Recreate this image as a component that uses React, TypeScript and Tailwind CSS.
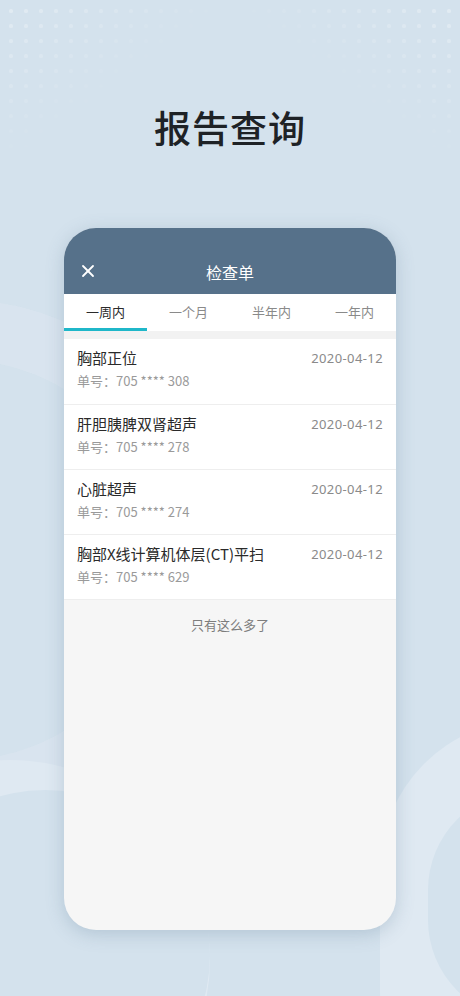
import { X } from 'lucide-react';

const TABS = ['一周内', '一个月', '半年内', '一年内'];

const REPORTS = [
  { name: '胸部正位', no: '705 **** 308', date: '2020-04-12' },
  { name: '肝胆胰脾双肾超声', no: '705 **** 278', date: '2020-04-12' },
  { name: '心脏超声', no: '705 **** 274', date: '2020-04-12' },
  { name: '胸部X线计算机体层(CT)平扫', no: '705 **** 629', date: '2020-04-12' },
];

function DotGrid({ flip }: { flip?: boolean }) {
  const dots = [];
  for (let r = 0; r < 10; r++) {
    for (let c = 0; c < 14; c++) {
      const fade = 1 - (r / 10 + c / 14) * 0.95;
      if (fade <= 0.05) continue;
      dots.push(
        <rect key={`${r}-${c}`} x={c * 15 + 9} y={r * 15 + 9} width={4} height={4} rx={1.5} fill="#ffffff" opacity={fade * 0.3} />
      );
    }
  }
  return (
    <svg width="220" height="160" className={flip ? 'absolute top-0 right-0 -scale-x-100' : 'absolute top-0 left-0'}>
      {dots}
    </svg>
  );
}

export default function App() {
  return (
    <div
      className="relative w-[460px] h-[996px] overflow-hidden bg-[#d4e2ed]"
      style={{ fontFamily: '"Noto Sans CJK SC", "Noto Sans", sans-serif' }}
    >
      {/* background decoration */}
      <DotGrid />
      <DotGrid flip />
      <div className="absolute left-[-300px] top-[300px] w-[520px] h-[520px] rounded-full border-[60px] border-[#dbe6ef]/70" />
      <div className="absolute left-[-190px] top-[760px] w-[400px] h-[400px] rounded-full bg-[#dfe9f2]" />
      <div className="absolute left-[-120px] top-[790px] w-[330px] h-[330px] rounded-full bg-[#d4e2ed]" />
      <div className="absolute left-[380px] top-[720px] w-[300px] h-[420px] rounded-full bg-[#dfe9f2]" />
      <div className="absolute left-[428px] top-[790px] w-[200px] h-[230px] rounded-full bg-[#d4e2ed]" />

      <div className="relative flex flex-col items-center">
        <h1 className="mt-[100px] h-[54px] text-[37px] leading-[54px] font-medium tracking-[1px] text-[#1e2226]">
          报告查询
        </h1>

        <div className="mt-[74px] w-[332px] h-[702px] rounded-[32px] overflow-hidden bg-[#f6f6f6] shadow-[0_4px_18px_rgba(80,110,140,0.25)] flex flex-col">
          {/* header */}
          <div className="h-[66px] bg-[#56718a] flex items-end pb-[10px] px-[14px] relative">
            <X className="w-[20px] h-[20px] text-white mb-[3px]" strokeWidth={2.2} />
            <div className="absolute inset-x-0 bottom-[10px] text-center text-white text-[16px] leading-[24px]">检查单</div>
          </div>

          {/* tabs */}
          <div className="h-[37px] bg-white grid grid-cols-4">
            {TABS.map((t, i) => (
              <div key={t} className="relative flex items-center justify-center pb-[2px]">
                <span className={i === 0 ? 'text-[13px] text-[#2b2b2b]' : 'text-[13px] text-[#8a8a8a]'}>{t}</span>
                {i === 0 && <div className="absolute left-0 right-0 bottom-0 h-[3px] bg-[#1fb7c9]" />}
              </div>
            ))}
          </div>
          <div className="h-[8px] bg-[#f2f2f2]" />

          {/* list */}
          <div className="bg-white">
            {REPORTS.map((r, i) => (
              <div
                key={r.no}
                className={`h-[65px] px-[13px] pt-[8px] flex justify-between ${i > 0 ? 'border-t border-[#eeeeee]' : ''}`}
              >
                <div className="flex flex-col">
                  <span className="text-[15px] leading-[22px] text-[#2a2a2a]">{r.name}</span>
                  <span className="mt-[2px] text-[13px] leading-[20px] text-[#9a9a9a]">单号：{r.no}</span>
                </div>
                <span
                  className="text-[13px] leading-[22px] tracking-[0.4px] text-[#8a8a8a]"
                  style={{ fontFamily: '"Noto Sans", sans-serif' }}
                >
                  {r.date}
                </span>
              </div>
            ))}
          </div>
          <div className="border-t border-[#eeeeee] pt-[15px] text-center text-[13px] leading-[20px] text-[#7d7d7d]">只有这么多了</div>
        </div>
      </div>
    </div>
  );
}
